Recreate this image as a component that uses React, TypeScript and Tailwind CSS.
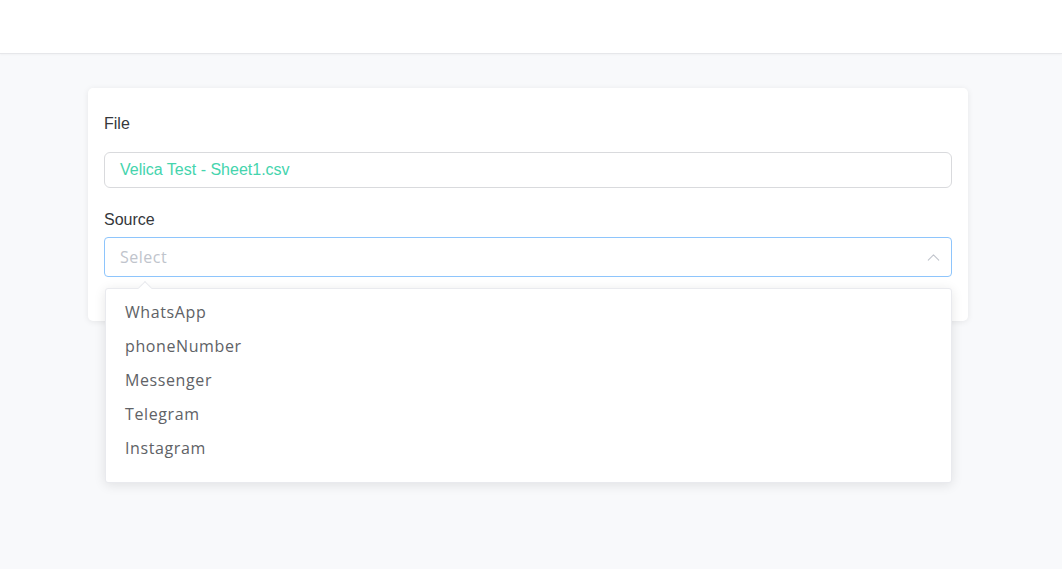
import { ChevronUp } from 'lucide-react';

const SOURCES = ['WhatsApp', 'phoneNumber', 'Messenger', 'Telegram', 'Instagram'];

export default function App() {
  return (
    <div className="flex h-[569px] w-full flex-col bg-[#f8f9fb] font-['Liberation_Sans',Arial,sans-serif]">
      {/* Top bar */}
      <header className="h-[54px] shrink-0 border-b border-[#e6e7ea] bg-white shadow-[0_1px_2px_rgba(0,0,0,0.03)]" />

      <main className="flex-1 pt-[34px] pl-[88px]">
        <div className="relative w-[880px] rounded-[5px] bg-white px-4 pt-[24px] pb-[44px] shadow-[0_1px_6px_rgba(0,0,0,0.08)]">
          <label className="block text-[16px] leading-[24px] text-[#35373b]">File</label>
          <div className="mt-[16px] flex h-[36px] items-center rounded-[6px] border border-[#d9dadd] px-[15px] text-[16px] text-[#45d4ad]">
            Velica Test - Sheet1.csv
          </div>

          <label className="mt-[20px] block text-[16px] leading-[24px] text-[#35373b]">Source</label>
          <div className="mt-[5px] flex h-[40px] items-center justify-between rounded-[4px] border border-[#8ec5fc] pl-[15px] pr-[7px] font-['Open_Sans',sans-serif] text-[16px] tracking-[0.5px] text-[#c0c4cc]">
            <span>Select</span>
            <ChevronUp size={21} strokeWidth={1.2} className="text-[#c0c4cc]" />
          </div>

          {/* Dropdown */}
          <div className="absolute left-[17px] top-[200px] z-10 w-[847px] rounded-[3px] border border-[#e9eaee] bg-white pt-[6px] pb-[17px] shadow-[0_2px_12px_rgba(0,0,0,0.1)]">
            <div className="absolute -top-[6px] left-[34px] h-[10px] w-[10px] rotate-45 border-l border-t border-[#e9eaee] bg-white" />
            {SOURCES.map(s => (
              <div
                key={s}
                className="flex h-[34px] items-center px-[19px] font-['Open_Sans',sans-serif] text-[16px] tracking-[0.6px] text-[#606266]"
              >
                {s}
              </div>
            ))}
          </div>
        </div>
      </main>
    </div>
  );
}
